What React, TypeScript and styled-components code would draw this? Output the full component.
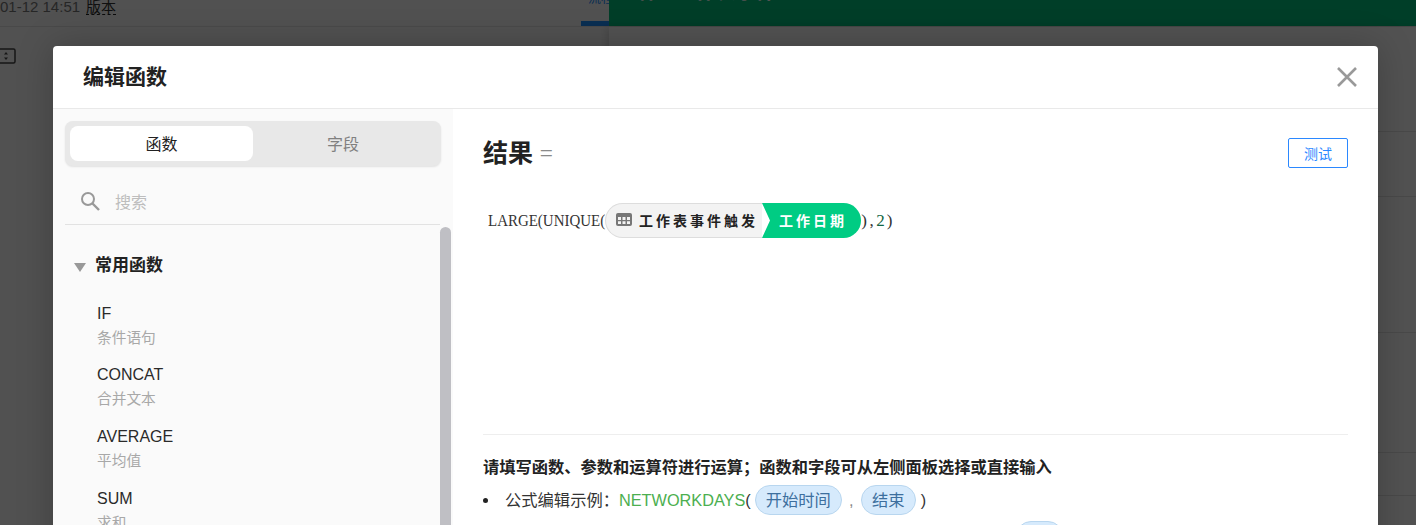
import React from "react";
import styled, { createGlobalStyle } from "styled-components";

const Global = createGlobalStyle`
  html, body { margin: 0; padding: 0; height: 100%; overflow: hidden; background: #fff; }
  #root { height: 100%; }
  * { box-sizing: border-box; }
  body { font-family: "Liberation Sans", "Noto Sans CJK SC", sans-serif; color: #222; }
`;

const Page = styled.div`
  position: relative;
  width: 1416px;
  height: 525px;
  overflow: hidden;
  background: #fcfcfc;
`;

const TopBar = styled.header`
  display: flex;
  height: 27px;
  border-bottom: 1px solid #e4e4e4;
`;

const TopLeft = styled.div`
  width: 609px;
  height: 26px;
  display: flex;
  overflow: hidden;
  justify-content: space-between;
`;

const Stamp = styled.div`
  display: flex;
  gap: 6px;
  font-size: 15px;
  line-height: 17px;
  margin-top: -2px;
  color: #777;
  height: 17px;
`;

const Version = styled.span`
  color: #333;
  border-bottom: 1px dashed #222;
`;

const TopTab = styled.div`
  width: 28px;
  height: 26px;
  border-bottom: 5px solid #1e90ff;
  color: #1e90ff;
  font-size: 13px;
  line-height: 13px;
  padding-left: 7px;
  overflow: hidden;
  white-space: nowrap;
  & > span { display: block; margin-top: -9px; }
`;

const GreenHead = styled.div`
  flex: 1;
  height: 26px;
  background: #00c07e;
  color: #fff;
  font-size: 20px;
  font-weight: 700;
  line-height: 24px;
  padding-left: 29px;
  overflow: hidden;
  & > span { display: block; margin-top: -20px; }
`;

const Body = styled.main`
  display: flex;
  height: 498px;
`;

const LeftArea = styled.section`
  width: 609px;
  padding-top: 21px;
`;

const RowIcon = styled.svg`
  display: block;
`;

const RightArea = styled.aside`
  flex: 1;
  background: #fff;
  box-shadow: -3px 0 8px rgba(0, 0, 0, 0.12);
`;

const RightRow = styled.div<{ $h: number }>`
  height: ${(p) => p.$h}px;
  border-bottom: 1px solid #e2e2e2;
`;

const Overlay = styled.div`
  position: absolute;
  inset: 0;
  background: rgba(0, 0, 0, 0.68);
`;

const Modal = styled.div`
  position: absolute;
  left: 53px;
  top: 46px;
  width: 1325px;
  height: 640px;
  background: #fff;
  border-radius: 4px;
  box-shadow: 0 0 36px rgba(0, 0, 0, 0.22);
  display: flex;
  flex-direction: column;
`;

const ModalHead = styled.div`
  height: 63px;
  flex: none;
  border-bottom: 1px solid #e9e9e9;
  display: flex;
  align-items: center;
  justify-content: space-between;
  padding: 0 20px 0 30px;
`;

const ModalTitle = styled.h2`
  margin: 0;
  font-size: 21px;
  line-height: 30px;
  font-weight: 700;
  color: #222;
`;

const Columns = styled.div`
  display: flex;
  flex: 1;
  min-height: 0;
`;

const SidePane = styled.div`
  width: 400px;
  flex: none;
  background: #fafafa;
  padding: 12px 0 0 12px;
  display: flex;
  flex-direction: column;
`;

const Tabs = styled.div`
  width: 376px;
  height: 45px;
  flex: none;
  padding: 5px;
  display: flex;
  background: #e8e8e8;
  border-radius: 8px;
  box-shadow: 0 1px 2px rgba(0, 0, 0, 0.1);
`;

const Tab = styled.div<{ $active?: boolean }>`
  flex: 0 0 183px;
  display: flex;
  align-items: center;
  justify-content: center;
  padding: 0 ${(p) => (p.$active ? 0 : 3)}px 2px 0;
  font-size: 16px;
  border-radius: 8px;
  background: ${(p) => (p.$active ? "#fff" : "transparent")};
  color: ${(p) => (p.$active ? "#222" : "#808080")};
`;

const SearchRow = styled.div`
  width: 375px;
  height: 59px;
  flex: none;
  display: flex;
  align-items: center;
  gap: 15px;
  padding: 12px 0 0 15px;
  border-bottom: 1px solid #e2e2e2;
  color: #bdbdbd;
  font-size: 16px;
`;

const ListArea = styled.div`
  display: flex;
  flex: 1;
  min-height: 0;
`;

const FunctionList = styled.div`
  width: 375px;
  flex: none;
`;

const GroupTitle = styled.div`
  display: flex;
  align-items: center;
  gap: 9px;
  padding: 25px 0 18.8px 9px;
  font-size: 17px;
  line-height: 32px;
  font-weight: 700;
  color: #222;
`;

const Triangle = styled.span`
  width: 0;
  height: 0;
  margin-top: 3px;
  border-left: 6px solid transparent;
  border-right: 6px solid transparent;
  border-top: 9px solid #999;
`;

const FunctionItem = styled.div`
  padding-left: 32px;
  margin-bottom: 11.6px;
`;

const FunctionName = styled.div`
  font-size: 16px;
  line-height: 25px;
  color: #2a2a2a;
`;

const FunctionDesc = styled.div`
  font-size: 14.7px;
  line-height: 25px;
  color: #a8a8a8;
`;

const ScrollThumb = styled.div`
  width: 11px;
  height: 400px;
  margin-top: 2px;
  flex: none;
  background: #bfbfc4;
  border-radius: 6px;
`;

const EditPane = styled.div`
  flex: 1;
  min-width: 0;
  padding: 29px 30px 0;
  display: flex;
  flex-direction: column;
`;

const ResultHead = styled.div`
  height: 30px;
  flex: none;
  display: flex;
  align-items: center;
  justify-content: space-between;
`;

const ResultLabel = styled.div`
  display: flex;
  align-items: center;
  gap: 8px;
`;

const ResultTitle = styled.span`
  font-size: 25px;
  font-weight: 700;
  line-height: 30px;
  color: #222;
`;

const Equals = styled.span`
  font-size: 18px;
  color: #8a8a8a;
  line-height: 30px;
  font-family: "Liberation Sans", sans-serif;
  transform: scaleX(1.25);
`;

const TestButton = styled.button`
  width: 60px;
  height: 30px;
  padding: 0;
  background: #fff;
  border: 1px solid #2b88ff;
  border-radius: 2px;
  color: #2b88ff;
  font: 14px "Liberation Sans", "Noto Sans CJK SC", sans-serif;
`;

const Editor = styled.div`
  height: 266px;
  flex: none;
  padding: 35px 0 0 5px;
`;

const Formula = styled.div`
  display: flex;
  align-items: center;
  height: 35px;
  font-family: "Liberation Serif", serif;
  font-size: 17px;
  color: #333;
`;

const FnLead = styled.span`
  width: 117px;
  flex: none;
  white-space: nowrap;
  transform: scaleX(0.88);
  transform-origin: left center;
`;

const Tail = styled.span<{ $w?: number }>`
  width: ${(p) => p.$w ?? 9}px;
  flex: none;
  text-align: center;
`;

const NumberToken = styled(Tail)`
  color: #116644;
`;

const SheetChip = styled.span`
  height: 35px;
  width: 157px;
  flex: none;
  display: flex;
  align-items: center;
  gap: 7px;
  padding: 0 0 2px 10px;
  background: #f3f3f3;
  border: 1px solid #ddd;
  border-right: 0;
  border-radius: 18px 0 0 18px;
  font: 700 14px "Noto Sans CJK SC", sans-serif;
  letter-spacing: 3px;
  color: #222;
  white-space: nowrap;
`;

const TableIcon = styled.svg`
  flex: none;
`;

const FieldChip = styled.span`
  height: 35px;
  width: 99px;
  flex: none;
  display: flex;
  align-items: center;
  padding: 0 0 2px 17px;
  background: #00cc83;
  border-radius: 0 18px 18px 0;
  clip-path: polygon(0 0, 100% 0, 100% 100%, 0 100%, 8px 50%);
  font: 700 14px "Noto Sans CJK SC", sans-serif;
  letter-spacing: 3px;
  color: #fff;
  white-space: nowrap;
`;

const Help = styled.div`
  border-top: 1px solid #eee;
  padding-top: 20px;
`;

const HelpTitle = styled.div`
  font-size: 16.26px;
  font-weight: 700;
  line-height: 24px;
  color: #222;
`;

const HelpList = styled.div`
  margin-top: 6px;
`;

const HelpLine = styled.div`
  display: flex;
  align-items: center;
  height: 30px;
  margin-bottom: 6px;
  font-size: 16.3px;
  line-height: 30px;
  color: #333;
`;

const Bullet = styled.span`
  width: 5px;
  height: 5px;
  margin-right: 17px;
  flex: none;
  background: #222;
  border-radius: 50%;
`;

const LineGap = styled.span<{ $w: number }>`
  width: ${(p) => p.$w}px;
  flex: none;
`;

const FnName = styled.span`
  color: #4caf50;
`;

const Chip = styled.span<{ $w: number }>`
  width: ${(p) => p.$w}px;
  height: 30px;
  flex: none;
  display: inline-flex;
  align-items: center;
  justify-content: center;
  background: #d6eafc;
  border: 1px solid #b8d6ef;
  border-radius: 15px;
  color: #3d6f9e;
`;

const Comma = styled.span`
  width: 19px;
  text-align: center;
  color: #888;
`;

const OpenParen = styled.span`
  margin-right: 4px;
`;

const CloseParen = styled.span`
  margin-left: 5px;
`;

export default function App() {
  return (
    <Page>
      <Global />
      <TopBar>
        <TopLeft>
          <Stamp>
            <span>01-12 14:51</span>
            <Version>版本</Version>
          </Stamp>
          <TopTab>
            <span>流程</span>
          </TopTab>
        </TopLeft>
        <GreenHead>
          <span>保 · 工作表事件</span>
        </GreenHead>
      </TopBar>
      <Body>
        <LeftArea>
          <RowIcon width="16" height="16" viewBox="0 0 16 16">
            <rect x="-3" y="1" width="18" height="14" rx="1.5" fill="none" stroke="#444" strokeWidth="1.5" />
            <path d="M4 6.5 6 4l2 2.5zM4 9.5 6 12l2-2.5z" fill="#444" />
          </RowIcon>
        </LeftArea>
        <RightArea>
          <RightRow $h={105} />
          <RightRow $h={65} />
          <RightRow $h={136} />
          <RightRow $h={120} />
          <RightRow $h={43} />
        </RightArea>
      </Body>
      <Overlay />
      <Modal>
        <ModalHead>
          <ModalTitle>编辑函数</ModalTitle>
          <svg width="22" height="22" viewBox="0 0 22 22">
            <path d="M2 2 20 20M20 2 2 20" stroke="#999" strokeWidth="2.6" fill="none" />
          </svg>
        </ModalHead>
        <Columns>
          <SidePane>
            <Tabs>
              <Tab $active>函数</Tab>
              <Tab>字段</Tab>
            </Tabs>
            <SearchRow>
              <svg width="20" height="20" viewBox="0 0 20 20">
                <circle cx="8" cy="8" r="6" fill="none" stroke="#999" strokeWidth="2" />
                <path d="M12.5 12.5 19 19" stroke="#999" strokeWidth="2.4" />
              </svg>
              <span>搜索</span>
            </SearchRow>
            <ListArea>
              <FunctionList>
                <GroupTitle>
                  <Triangle />
                  常用函数
                </GroupTitle>
                <FunctionItem>
                  <FunctionName>IF</FunctionName>
                  <FunctionDesc>条件语句</FunctionDesc>
                </FunctionItem>
                <FunctionItem>
                  <FunctionName>CONCAT</FunctionName>
                  <FunctionDesc>合并文本</FunctionDesc>
                </FunctionItem>
                <FunctionItem>
                  <FunctionName>AVERAGE</FunctionName>
                  <FunctionDesc>平均值</FunctionDesc>
                </FunctionItem>
                <FunctionItem>
                  <FunctionName>SUM</FunctionName>
                  <FunctionDesc>求和</FunctionDesc>
                </FunctionItem>
              </FunctionList>
              <ScrollThumb />
            </ListArea>
          </SidePane>
          <EditPane>
            <ResultHead>
              <ResultLabel>
                <ResultTitle>结果</ResultTitle>
                <Equals>=</Equals>
              </ResultLabel>
              <TestButton>测试</TestButton>
            </ResultHead>
            <Editor>
              <Formula>
                <FnLead>LARGE(UNIQUE(</FnLead>
                <SheetChip>
                  <TableIcon width="16" height="13" viewBox="0 0 16 13">
                    <rect width="16" height="13" rx="2" fill="#777" />
                    <path d="M2 4h3v3H2zM6.5 4h3v3h-3zM11 4h3v3h-3zM2 8.2h3v2.8H2zM6.5 8.2h3v2.8h-3zM11 8.2h3v2.8h-3z" fill="#f3f3f3" />
                  </TableIcon>
                  工作表事件触发
                </SheetChip>
                <FieldChip>工作日期</FieldChip>
                <Tail $w={6}>)</Tail>
                <Tail $w={9}>,</Tail>
                <NumberToken $w={9}>2</NumberToken>
                <Tail $w={9}>)</Tail>
              </Formula>
            </Editor>
            <Help>
              <HelpTitle>请填写函数、参数和运算符进行运算；函数和字段可从左侧面板选择或直接输入</HelpTitle>
              <HelpList>
                <HelpLine>
                  <Bullet />
                  公式编辑示例：<FnName>NETWORKDAYS</FnName>
                  <OpenParen>(</OpenParen>
                  <Chip $w={87}>开始时间</Chip>
                  <Comma>,</Comma>
                  <Chip $w={55}>结束</Chip>
                  <CloseParen>)</CloseParen>
                </HelpLine>
                <HelpLine>
                  <LineGap $w={533} />
                  <Chip $w={47}>结束</Chip>
                </HelpLine>
              </HelpList>
            </Help>
          </EditPane>
        </Columns>
      </Modal>
    </Page>
  );
}
